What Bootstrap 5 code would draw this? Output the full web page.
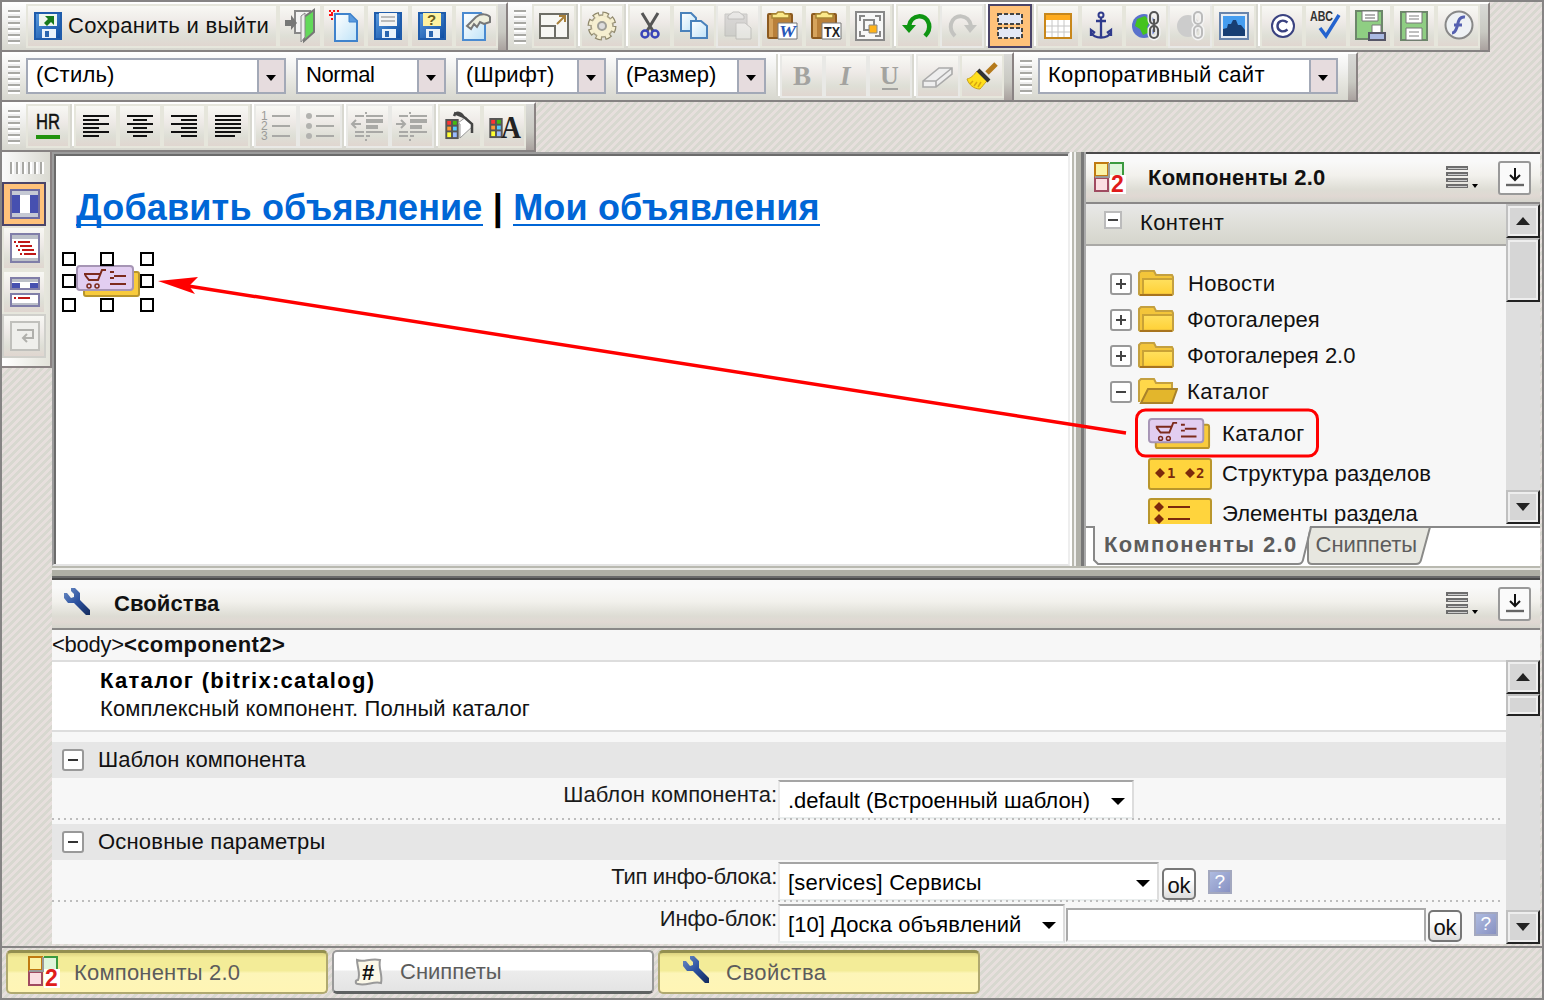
<!DOCTYPE html>
<html lang="ru">
<head>
<meta charset="utf-8">
<meta name="viewport" content="width=device-width, initial-scale=1">
<title>Визуальный редактор</title>
<link rel="stylesheet" href="https://cdn.jsdelivr.net/npm/bootstrap@5.3.0/dist/css/bootstrap.min.css">
<style>
body{font-family:"Liberation Sans",Arial,sans-serif;font-size:22px;line-height:26px;color:#111;margin:0;overflow:hidden;letter-spacing:.2px}
svg{display:block;flex:none;overflow:visible}
.app{width:1544px;height:1000px;border:2px solid #868484;background:linear-gradient(135deg,#e7dfdd 25%,#d8d8d0 25% 50%,#e7dfdd 50% 75%,#d8d8d0 75%) 0 0/8px 8px}
.tbrow{height:50px}
.tb{height:50px;border-right:2px solid #8a8383;border-bottom:2px solid #868282;border-top:2px solid #fff;background:linear-gradient(#fdfdfd,#f0f0ee 35%,#e6e6e0 60%,#d7d7cf);align-items:flex-start}
.grip{width:12px;height:34px;margin:6px 6px 0 6px;background:repeating-linear-gradient(#a8a8a4 0 2px,#fff 2px 4px,#eee 4px 6px)}
.ib{width:44px;height:44px;border:2px solid #e6e6dc;background:linear-gradient(#f8f8f4,#eeeae7 40%,#dedfd6 75%,#e0d6d0);padding:0;display:flex;align-items:center;justify-content:center;flex:none}
.ib.dim{border-color:#e9e9e6}
.ib.on{border:2px solid #4b4569;background:#ffc27a}
.ib.savebtn{width:252px;justify-content:flex-start;padding-left:6px;gap:6px;letter-spacing:.3px;color:#111}
.vsep{width:4px;height:42px;flex:none;background:linear-gradient(90deg,#d8d8d0 50%,#fff 50%)}
.cap{width:8px;height:46px;background:linear-gradient(#d9d9d7,#c9c9c2 60%,#aaa29f);flex:none;margin-left:auto}
.combo{height:36px;margin-top:4px;border:2px solid #a3a9b7;background:#fff;padding-left:8px;line-height:30px;display:flex;justify-content:space-between;margin-right:10px;flex:none;color:#000;white-space:nowrap}
.combo i{width:27px;height:32px;background:#e6dcde;border-left:2px solid #a3a9b7;display:flex;align-items:center;justify-content:center}
.combo i:after{content:"";border:5px solid transparent;border-top:6px solid #000;border-bottom:0;margin:4px 2px 0 0}
.side{width:50px}
.sidebox{height:216px;border-right:2px solid #8a8383;border-bottom:2px solid #8a8383;background:linear-gradient(90deg,#fff,#e3e3da)}
.sidebox .ib svg{margin-left:2px}
.sidegrip{height:30px;padding:10px 0 0 8px;background:linear-gradient(90deg,#fafafa,#d9d9d1)}
.sidegrip div{width:34px;height:12px;background:repeating-linear-gradient(90deg,#a8a8a4 0 2px,#fff 2px 4px,#eee 4px 6px)}
.editor{width:1018px;height:414px;border:2px solid #9c9c9c;border-right-color:#eee;border-bottom-color:#e4e4e4;background:#fff;box-shadow:inset 2px 2px #6b6b6b;position:relative;padding:32px 0 0 22px}
.editor h1{font-size:36px;font-weight:700;line-height:44px;margin:0;color:#000;white-space:nowrap;letter-spacing:.17px}
.editor h1 a{color:#0066d6;text-decoration:none;border-bottom:2px solid #0066d6;display:inline-block;line-height:36px;height:36px}
.frame8{position:absolute;left:6px;top:96px}
.vsplit{width:16px;height:414px;background:linear-gradient(90deg,#fff 0 2px,#b9b9b0 2px 4px,#f0f0ee 4px 6px,#b0b0a8 6px 11px,#777 11px 14px,#aaa 14px)}
.panel{width:454px;height:414px;background:#f7f7f7}
.phead{height:52px;border-top:2px solid #4a4a4a;border-bottom:2px solid #8a8888;background:linear-gradient(#f9f9f9 15%,#f2f1ec 45%,#dddcd4 75%,#e0d8d3 88%,#d4d4cc);font-weight:700;color:#111;flex:none}
.pin{width:33px;height:34px;border:2px solid #999;border-radius:3px;background:#fafafa;display:flex;align-items:center;justify-content:center;flex:none}
.grp{height:42px;background:linear-gradient(#e8e8e8,#e0e0da 45%,#d5d5cc);border-bottom:2px solid #aaa9a6;padding:0 0 3px 18px;gap:18px}
.sb{width:34px;background:#dedede;flex:none}
.sbb{height:34px;border:2px solid #c0c0c0;border-right:2px solid #222;border-bottom:2px solid #222;background:#d6d6d6;box-shadow:inset 2px 2px #eee,inset -2px -2px #eee;display:flex;align-items:center;justify-content:center;flex:none}
.pm{width:22px;height:22px;border:2px solid #999;border-radius:3px;background:#fff;display:flex;align-items:center;justify-content:center;flex:none}
.pm.s18{width:18px;height:18px;border-radius:0;border-color:#bbb}
.node{height:36px;padding-left:24px}
.node>svg{margin:0 12px 2px 6px}
.leaf{height:40px;padding-left:62px;gap:10px}
.tabsbar{height:40px;width:454px;color:#5c5c5c;position:relative;padding-bottom:2px}
.hsplit{height:12px;background:linear-gradient(#b9b9b0 0 2px,#ecece8 2px 4px,#b0b0a6 4px 10px,#6b6b6b 10px);margin-left:50px;width:1488px}
.props{margin-left:50px;width:1488px;height:366px;background:#f7f7f7}
.crumb{height:32px;border-bottom:2px solid #ddd;flex:none;white-space:nowrap;line-height:30px}
.about{height:70px;border-bottom:2px solid #ddd;background:#fff;padding:5px 0 0 48px;line-height:28px}
.sect{height:36px;background:#e6e6e6;padding-left:10px;gap:14px;letter-spacing:.1px}
.prow{height:46px;display:flex}
.plabel{width:725px;margin-right:1px;text-align:right;line-height:33px;flex:none;color:#1a1a1a;letter-spacing:0}
.psel{height:39px;border:2px solid #ddd;border-top-color:#a5a5a5;border-left-color:#e8e8e8;border-bottom-color:#eaeeee;background:#fff;display:flex;align-items:center;justify-content:space-between;padding:3px 7px 0 8px;color:#000;white-space:nowrap;flex:none}
.psel:after{content:"";border:7px solid transparent;border-top:7px solid #000;border-bottom:0}
.okb{width:34px;height:32px;border:2px solid #777;border-radius:5px;background:linear-gradient(#fff 35%,#ddd);display:flex;align-items:center;justify-content:center;padding-top:4px;flex:none;font-size:22px;line-height:20px;letter-spacing:-.2px}
.hlp{width:24px;height:24px;border:2px solid #a3a8bf;background:linear-gradient(135deg,#aebbe0,#8891c2);color:#fff;font-size:19px;font-weight:400;line-height:20px;text-align:center;flex:none}
.dots{height:2px;background:repeating-linear-gradient(90deg,#bdbdbd 0 2px,transparent 2px 6px);width:1452px}
.tasks{height:52px;border-top:2px solid #868484;padding:2px 0 0 4px;gap:4px}
.task{width:322px;height:44px;border:2px solid #b0a970;border-top:3px solid #938f50;border-radius:5px;background:linear-gradient(#ddd380 0,#f3ec98 12% 45%,#fdf5b8 52%,#fff5b5);color:#5c5c5c;padding-left:20px;gap:14px;letter-spacing:.2px}
.task.off{border:2px solid #999;border-bottom:3px solid #5f6262;background:linear-gradient(#fff 45%,#ececec 50%,#e4e4e4);letter-spacing:0}
.arrowlay{position:absolute;left:0;top:0;pointer-events:none}
</style>
</head>
<body>
<svg width="0" height="0" class="position-absolute">
<defs>
<linearGradient id="gb" x1="0" y1="0" x2="1" y2="1"><stop offset="0" stop-color="#5b9ce0"/><stop offset="1" stop-color="#0a4aa0"/></linearGradient>
<linearGradient id="gl" x1="0" y1="0" x2="1" y2="1"><stop offset="0" stop-color="#fff"/><stop offset="1" stop-color="#bfe3f8"/></linearGradient>
<linearGradient id="gf" x1="0" y1="0" x2="0" y2="1"><stop offset="0" stop-color="#ffdf5c"/><stop offset="1" stop-color="#ffd23a"/></linearGradient>
<linearGradient id="gw" x1="0" y1="0" x2="1" y2="1"><stop offset="0" stop-color="#6c8dc4"/><stop offset=".5" stop-color="#2c52a0"/><stop offset="1" stop-color="#132a5c"/></linearGradient>
<symbol id="floppy" viewBox="0 0 28 28"><path d="M1 1h26v26H1z" fill="url(#gb)" stroke="#1f5cab" stroke-width="2"/><path d="M8 17h14v9H8z" fill="#e8f2fb"/><path d="M11 19h4v6h-4z" fill="#2a66b0"/></symbol>
<symbol id="cart" viewBox="0 0 66 34"><rect x="8" y="7" width="55" height="24" rx="2" fill="#f8cb3c" stroke="#b9962c" stroke-width="2"/><rect x="1" y="1" width="56" height="24" rx="3" fill="#e2cef1" stroke="#a695b5" stroke-width="2"/><path d="M8 9h16M9 10l4 5h9l4-10h4M34 7h4M34 13h4M34 19h16M38 11h12" fill="none" stroke="#7c2a1c" stroke-width="2"/><circle cx="13" cy="21" r="2" fill="none" stroke="#7c2a1c" stroke-width="1.500"/><circle cx="21" cy="21" r="2" fill="none" stroke="#7c2a1c" stroke-width="1.500"/></symbol>
<symbol id="folder" viewBox="0 0 36 26"><path d="M1 24V3l2-2h13l2 4h16l1 2v17l-1 1H2z" fill="#f3c53a" stroke="#c4a040" stroke-width="2"/><path d="M5 24V9h29" fill="none" stroke="#c9a236" stroke-width="2"/><path d="M6 10h28v13H6z" fill="url(#gf)"/><path d="M2 25h32" stroke="#a8741e" stroke-width="2"/></symbol>
<symbol id="folderopen" viewBox="0 0 40 26"><path d="M1 24V3l2-2h13l2 4h16v5" fill="#ffd84a" stroke="#c4a040" stroke-width="2"/><path d="M3 25l7-14h29l-5 14z" fill="#e3b62c" stroke="#a9822a" stroke-width="2"/></symbol>
<symbol id="comp2" viewBox="0 0 32 32"><path d="M1 1h13v13H1z" fill="#fbf3a6" stroke="#c07a10" stroke-width="2"/><path d="M16 1h13v13H16z" fill="#dff5dc"/><path d="M16 1h13v12" fill="none" stroke="#3b9a3f" stroke-width="2"/><path d="M1 16h13v13H1z" fill="#fbdfe2" stroke="#a04a60" stroke-width="2"/><path d="M1 15h14V1" fill="none" stroke="#999" stroke-width="2"/><path d="M16 13h16v19H16z" fill="#fff"/><text x="17" y="30" font-family="Liberation Sans" font-weight="700" font-size="23" fill="#e01b1b" letter-spacing="0">2</text></symbol>
<symbol id="wrench" viewBox="0 0 26 28"><path d="M0 5v5l4 5h6l12 12h4v-5L16 12V5l-5-5H7v3l3 3v3L7 10 3 5z" fill="url(#gw)"/></symbol>
<symbol id="clip" viewBox="0 0 32 32"><rect x="2" y="4" width="24" height="24" rx="1" fill="#b9803a" stroke="#8c5a1f" stroke-width="2"/><path d="M3 5h4v22H3z" fill="#d6a35c"/><path d="M6 8V4h4l2-2h5l2 2h4v4z" fill="#fbe98a" stroke="#a88534" stroke-width="1.5"/></symbol>
<symbol id="pal" viewBox="0 0 14 22"><path d="M0 0h14v21H0z" fill="#555"/><path d="M2 2h4v4H2z" fill="#f33"/><path d="M8 2h4v4H8z" fill="#4b1"/><path d="M2 8h4v4H2z" fill="#f93"/><path d="M8 8h4v4H8z" fill="#5cf"/><path d="M2 14h4v5H2z" fill="#ff3"/><path d="M8 14h4v5H8z" fill="#9bf"/></symbol>
<symbol id="menu" viewBox="0 0 34 24"><path d="M0 0h22v4H0zM0 6h22v4H0zM0 12h22v4H0zM0 18h22v4H0z" fill="#6d6d6d"/><path d="M2 2h19v1H2zM2 8h19v1H2zM2 14h19v1H2zM2 20h19v1H2z" fill="#ccc"/><path d="M26 18h6l-3 4z" fill="#000"/></symbol>
<symbol id="dock" viewBox="0 0 20 22"><path d="M10 1v11M5 8l5 5 5-5" fill="none" stroke="#111" stroke-width="2"/><path d="M1 18h18" stroke="#666" stroke-width="2.4"/></symbol>
</defs>
</svg>

<div class="app d-flex flex-column position-relative">
  <!-- first toolbar row -->
  <div class="tbrow d-flex">
    <div class="tb d-flex" style="width:506px">
      <div class="grip"></div>
      <button class="ib savebtn" type="button"><svg width="28" height="28"><use href="#floppy"/><path d="M5 2h18v12H5z" fill="#eef6ee"/><path d="M11 4h9v9l-3-3-4 4-3-3 4-4z" fill="#187a1c"/></svg><span class="text-nowrap">Сохранить и выйти</span></button>
      <button class="ib" type="button"><svg width="32" height="34"><path d="M11 2h15v22H11z" fill="#f4f4f4" stroke="#888" stroke-width="2"/><path d="M20 8l10-7v22l-10 9z" fill="#63d95a" stroke="#777" stroke-width="2"/><path d="M17 7l4-3v24l-4 5z" fill="#eee" stroke="#888"/><path d="M1 11h6V6l6 8-6 7v-4H1z" fill="#777"/></svg></button>
      <button class="ib" type="button"><svg width="32" height="34"><path d="M7 5h15l7 7v20H7z" fill="url(#gl)" stroke="#3f82cc" stroke-width="2"/><path d="M21 5v8h8" fill="#5a9adf" stroke="#3f82cc"/><path d="M1 1h2v2H1zM3 3h2v2H3zM5 1h2v2H5zM1 5h4v2H1zM9 1h2v2H9zM3 9h2v2H3z" fill="#f11"/></svg></button>
      <button class="ib" type="button"><svg width="28" height="28"><use href="#floppy"/><path d="M5 1h18v13H5z" fill="#f4f4f4"/><path d="M7 5h14M7 9h14" stroke="#bbb" stroke-width="2"/></svg></button>
      <button class="ib" type="button"><svg width="28" height="28"><use href="#floppy"/><path d="M5 1h18v13H5z" fill="#fff2a0"/><text x="9" y="13" font-family="Liberation Sans" font-weight="700" font-size="15" fill="#665c20">?</text></svg></button>
      <button class="ib" type="button"><svg width="30" height="32"><path d="M2 3h18l4 5v22H2z" fill="url(#gl)" stroke="#4a8ad0" stroke-width="2"/><path d="M6 16l9-9c5-4 12-3 14 0v5l-6 2-4-2-3 5-3-3-3 5z" fill="#eeeedd" stroke="#777" stroke-width="2"/></svg></button>
      <div class="cap"></div>
    </div>
    <div class="tb d-flex" style="width:982px">
      <div class="grip"></div>
      <button class="ib" type="button"><svg width="30" height="28"><path d="M1 2h28v24H1zM1 14h15v12" fill="#f7f7f3" stroke="#6e6e66" stroke-width="2"/><path d="M18 12l8-8M20 4h6v6" stroke="#a8803a" stroke-width="2" fill="none"/></svg></button><div class="vsep"></div>
      <button class="ib" type="button"><svg width="30" height="30"><circle cx="15" cy="15" r="11.500" fill="none" stroke="#8f886c" stroke-width="6" stroke-dasharray="6 3.030"/><circle cx="15" cy="15" r="11" fill="#f6efd0" stroke="#a69f84" stroke-width="1.500"/><circle cx="15" cy="15" r="11.500" fill="none" stroke="#f6efd0" stroke-width="3.500" stroke-dasharray="4 5.030" stroke-dashoffset="-1"/><circle cx="15" cy="15" r="4" fill="#ddd" stroke="#9f9f98" stroke-width="2"/></svg></button><div class="vsep"></div>
      <button class="ib" type="button"><svg width="20" height="28"><path d="M2 1l11 18M18 1L7 19" stroke="#555" stroke-width="3"/><circle cx="5" cy="22" r="3.500" fill="none" stroke="#3a46b8" stroke-width="2.500"/><circle cx="15" cy="22" r="3.500" fill="none" stroke="#3a46b8" stroke-width="2.500"/></svg></button>
      <button class="ib" type="button"><svg width="28" height="28"><path d="M1 1h10l5 5v13H1z" fill="url(#gl)" stroke="#4a82bb" stroke-width="2"/><path d="M11 9h10l6 5v12H11z" fill="url(#gl)" stroke="#4a82bb" stroke-width="2"/></svg></button>
      <button class="ib dim" type="button"><svg width="32" height="32"><g opacity=".45"><path d="M3 4h22v22H3z" fill="#bbb" stroke="#999"/><path d="M6 6l5-4h6l5 4v3H6z" fill="#ddd" stroke="#888"/><path d="M14 13h9l6 5v11H14z" fill="#eee" stroke="#999"/></g></svg></button>
      <button class="ib" type="button"><svg width="32" height="32"><use href="#clip"/><path d="M12 13h19v16H12z" fill="#fff" stroke="#777"/><text x="13" y="27" font-family="Liberation Serif" font-style="italic" font-weight="700" font-size="17" textLength="17" lengthAdjust="spacingAndGlyphs" fill="#2756b8">W</text></svg></button>
      <button class="ib" type="button"><svg width="32" height="32"><use href="#clip"/><path d="M12 13h19v16H12z" fill="#fff" stroke="#777"/><text x="14" y="27" font-family="Liberation Sans" font-weight="700" font-size="15" textLength="16" lengthAdjust="spacingAndGlyphs" fill="#222">TX</text></svg></button>
      <button class="ib" type="button"><svg width="30" height="30"><path d="M1 1h28v28H1z" fill="#f7f7f7" stroke="#888" stroke-width="2"/><path d="M5 10V5h5M20 5h5v5M25 20v5h-5M10 25H5v-5M9 9h10v10H9z" fill="none" stroke="#888" stroke-width="2"/><path d="M14 14h8v8h-8z" fill="#ffb31a" stroke="#888"/></svg></button><div class="vsep"></div>
      <button class="ib" type="button"><svg width="32" height="26"><path d="M7 13C9 1 24 0 27 11c1 5-1 9-4 12" fill="none" stroke="#0f9512" stroke-width="4.500"/><path d="M0 12h14l-7 8z" fill="#0f9512"/></svg></button>
      <button class="ib dim" type="button"><svg width="32" height="26"><path d="M25 13C23 1 8 0 5 11c-1 5 1 9 4 12" fill="none" stroke="#c3c3c0" stroke-width="4"/><path d="M31 12H18l6 8z" fill="#c3c3c0"/></svg></button><div class="vsep"></div>
      <button class="ib on" type="button"><svg width="28" height="30"><path d="M2 3h24v10H2zM2 17h24v10H2z" fill="#e3e8f6" stroke="#444" stroke-width="2" stroke-dasharray="4 2"/></svg></button><div class="vsep"></div>
      <button class="ib" type="button"><svg width="28" height="28"><path d="M1 2h26v24H1z" fill="#fff" stroke="#c8871b" stroke-width="2"/><path d="M2 3h24v5H2z" fill="#ffab1f"/><path d="M8 8v17M14 8v17M20 8v17M2 14h24M2 20h24" stroke="#c6c6c6"/></svg></button>
      <button class="ib" type="button"><svg width="26" height="30"><circle cx="12" cy="4" r="2.500" fill="none" stroke="#2f3a8c" stroke-width="2"/><path d="M12 7v20M7 10h10M2 25v-6l4 3M22 25v-6l-4 3M3 22c2 6 16 6 18 0" fill="none" stroke="#2f3a8c" stroke-width="2.300"/></svg></button>
      <button class="ib" type="button"><svg width="30" height="32"><circle cx="13" cy="16" r="12" fill="#5a72cc"/><path d="M6 9l8-3 5 5-3 6 3 5-7 3-3-6-5-3z" fill="#45c31f"/><g fill="none" stroke="#f4f4f4" stroke-width="5"><rect x="19" y="2" width="8" height="12" rx="4"/><rect x="19" y="16" width="8" height="12" rx="4"/></g><g fill="none" stroke="#555" stroke-width="2.200"><rect x="19" y="2" width="8" height="12" rx="4"/><rect x="19" y="16" width="8" height="12" rx="4"/><path d="M23 9v13"/></g></svg></button>
      <button class="ib dim" type="button"><svg width="30" height="32"><circle cx="13" cy="16" r="11" fill="#ccc"/><g fill="none" stroke="#f4f4f4" stroke-width="5"><rect x="19" y="2" width="8" height="12" rx="4"/><rect x="19" y="16" width="8" height="12" rx="4"/></g><g fill="none" stroke="#bbb" stroke-width="2"><rect x="19" y="2" width="8" height="12" rx="4"/><rect x="19" y="16" width="8" height="12" rx="4"/></g></svg></button>
      <button class="ib" type="button"><svg width="30" height="28"><path d="M1 1h28v26H1z" fill="#e8edf4" stroke="#6884ac" stroke-width="2"/><path d="M4 4h22v20H4z" fill="#459df0"/><path d="M4 24v-7l4-1 1-4h3l2-4h3l2 5h3l4 5v6z" fill="#173e73"/></svg></button><div class="vsep"></div>
      <button class="ib" type="button"><svg width="24" height="28"><circle cx="13" cy="14" r="11" fill="#fff" stroke="#3a4280" stroke-width="2"/><path d="M17.500 10.500c-5-4-10-1-10 3.500s5 7.500 10 3.500" fill="none" stroke="#3a4280" stroke-width="2.400"/></svg></button>
      <button class="ib" type="button"><svg width="34" height="34"><text x="1" y="12" font-family="Liberation Sans" font-size="14" font-weight="700" fill="#333" textLength="23" lengthAdjust="spacingAndGlyphs">ABC</text><path d="M11 19l6 8L30 6" fill="none" stroke="#2463cf" stroke-width="3.500"/></svg></button>
      <button class="ib" type="button"><svg width="32" height="34"><path d="M2 2h26v28H2z" fill="#8fce83" stroke="#6d876b" stroke-width="2"/><path d="M8 2h16v10H8zM18 16h9v8h-9z" fill="#fff" stroke="#777"/><path d="M11 6h10M11 9h10" stroke="#999" stroke-width="1.500"/><path d="M15 24h16v7H15z" fill="#a9b9e2" stroke="#556" stroke-width="2"/></svg></button>
      <button class="ib" type="button"><svg width="30" height="32"><path d="M2 2h26v28H2z" fill="#8fce83" stroke="#6d876b" stroke-width="2"/><path d="M7 2h16v11H7zM7 18h16v12H7z" fill="#fff" stroke="#777"/><path d="M10 6h10M10 9h10M10 22h10M10 26h10" stroke="#aaa" stroke-width="1.500"/></svg></button>
      <button class="ib" type="button"><svg width="30" height="32"><circle cx="16" cy="15" r="13.500" fill="#eef1f4" stroke="#888" stroke-width="2"/><path d="M22 7c-7-1-7 7-8 10s-2 6-5 6M11 15h8" fill="none" stroke="#5560b0" stroke-width="3"/></svg></button>
      <div class="cap"></div>
    </div>
  </div>
  <!-- second toolbar row -->
  <div class="tbrow d-flex">
    <div class="tb d-flex" style="width:1012px">
      <div class="grip"></div>
      <div class="combo" style="width:260px">(Стиль)<i></i></div>
      <div class="combo" style="width:150px;letter-spacing:-.4px">Normal<i></i></div>
      <div class="combo" style="width:150px">(Шрифт)<i></i></div>
      <div class="combo" style="width:150px;letter-spacing:0">(Размер)<i></i></div>
      <div class="vsep"></div>
      <button class="ib dim" type="button"><svg width="26" height="34"><text x="4" y="26" font-family="Liberation Serif" font-size="27" font-weight="700" fill="#a3a3a0">B</text></svg></button>
      <button class="ib dim" type="button"><svg width="26" height="34"><text x="7" y="26" font-family="Liberation Serif" font-style="italic" font-size="27" font-weight="700" fill="#a3a3a0">I</text></svg></button>
      <button class="ib dim" type="button"><svg width="26" height="34"><text x="3" y="25" font-family="Liberation Serif" font-size="26" font-weight="700" fill="#a3a3a0">U</text><path d="M5 30h16" stroke="#a3a3a0" stroke-width="2"/></svg></button><div class="vsep"></div>
      <button class="ib dim" type="button"><svg width="34" height="22"><path d="M2 16L18 3h13v6L15 22H2zM2 16h13v6M15 16L31 3" fill="#eee" stroke="#aaa" stroke-width="1.600"/></svg></button>
      <button class="ib" type="button"><svg width="34" height="28"><path d="M22 11L31 2" stroke="#b57a1b" stroke-width="5"/><path d="M2 17c4-1 6-3 10-8l10 10c-3 3-5 6-7 8C9 27 4 23 2 17z" fill="#ffdf1c" stroke="#c9a21c"/><path d="M8 19l-3 3M12 20l-3 4M16 20l-3 5" stroke="#d9a512" stroke-width="1.500"/><path d="M13 8l11 11" stroke="#333" stroke-width="4"/></svg></button>
      <div class="cap"></div>
    </div>
    <div class="tb d-flex" style="width:344px">
      <div class="grip"></div>
      <div class="combo" style="width:300px;letter-spacing:.3px">Корпоративный сайт<i></i></div>
      <div class="cap"></div>
    </div>
  </div>
  <!-- third toolbar row -->
  <div class="tbrow d-flex">
    <div class="tb d-flex" style="width:534px">
      <div class="grip"></div>
      <button class="ib" type="button"><svg width="26" height="32"><text x="1" y="19" font-family="Liberation Sans" font-size="22" fill="#111" stroke="#111" stroke-width=".5" textLength="24" lengthAdjust="spacingAndGlyphs">HR</text><path d="M1 27h24" stroke="#22930e" stroke-width="4"/></svg></button><div class="vsep"></div>
      <button class="ib" type="button"><svg width="28" height="24"><path d="M1 2h26M1 6h16M1 10h26M1 14h16M1 18h26M1 22h16" stroke="#111" stroke-width="2"/></svg></button>
      <button class="ib" type="button"><svg width="28" height="24"><path d="M1 2h26M7 6h14M1 10h26M7 14h14M1 18h26M7 22h14" stroke="#111" stroke-width="2"/></svg></button>
      <button class="ib" type="button"><svg width="28" height="24"><path d="M1 2h26M11 6h16M1 10h26M11 14h16M1 18h26M11 22h16" stroke="#111" stroke-width="2"/></svg></button>
      <button class="ib" type="button"><svg width="28" height="24"><path d="M1 2h26M1 6h26M1 10h26M1 14h26M1 18h26M1 22h20" stroke="#111" stroke-width="2"/></svg></button><div class="vsep"></div>
      <button class="ib dim" type="button"><svg width="32" height="30"><path d="M12 5h18M12 15h18M12 25h18" fill="none" stroke="#a9a9a6" stroke-width="2"/><g font-family="Liberation Sans" font-size="12" fill="#9c9c99"><text x="1" y="9">1</text><text x="1" y="19">2</text><text x="1" y="29">3</text></g></svg></button>
      <button class="ib dim" type="button"><svg width="32" height="30"><path d="M12 5h18M12 15h18M12 25h18" stroke="#a9a9a6" stroke-width="2"/><circle cx="5" cy="5" r="3" fill="#b2b2af"/><circle cx="5" cy="15" r="3" fill="#b2b2af"/><circle cx="5" cy="25" r="3" fill="#b2b2af"/></svg></button><div class="vsep"></div>
      <button class="ib dim" type="button"><svg width="34" height="32"><path d="M4 6h9M15 6h17M16 16h11M4 22h9M15 22h17M4 26h9M15 26h4M1 14h9M5 10l-4 4 4 4M15 2v2M15 29v2" fill="none" stroke="#a9a9a6" stroke-width="2"/><path d="M15 9h17v4H15zM15 15h12v4H15z" fill="#a9a9a6"/></svg></button>
      <button class="ib dim" type="button"><svg width="34" height="32"><path d="M4 6h9M15 6h17M16 16h11M4 22h9M15 22h17M4 26h9M15 26h4M1 14h9M6 10l4 4-4 4M15 2v2M15 29v2" fill="none" stroke="#a9a9a6" stroke-width="2"/><path d="M15 9h17v4H15zM15 15h12v4H15z" fill="#a9a9a6"/></svg></button><div class="vsep"></div>
      <button class="ib" type="button"><svg width="32" height="30"><use href="#pal" x="1" y="8" width="14" height="21"/><path d="M14 12l8-6 7 9-13 12V13z" fill="#fff" stroke="#999"/><path d="M10 2l10 4 8 7v9M10 5c2-5 8-4 10 2" fill="none" stroke="#444" stroke-width="2.500"/></svg></button>
      <button class="ib" type="button"><svg width="34" height="34"><use href="#pal" x="2" y="9" width="14" height="21"/><text x="14" y="29" font-family="Liberation Serif" font-weight="700" font-size="32" textLength="20" lengthAdjust="spacingAndGlyphs" fill="#222">A</text></svg></button>
      <div class="cap"></div>
    </div>
  </div>
  <!-- work area -->
  <div class="d-flex">
    <div class="side">
      <div class="sidebox">
        <div class="sidegrip"><div></div></div>
        <button class="ib on" type="button"><svg width="30" height="30"><path d="M1 1h28v28H1z" fill="#c5c9d4" stroke="#6d6ba0" stroke-width="2"/><path d="M2 6h26v18H2z" fill="#4650b0"/><path d="M10 6h10v18H10z" fill="#fff"/></svg></button>
        <button class="ib" type="button"><svg width="30" height="30"><path d="M1 1h28v28H1z" fill="#fff" stroke="#807ea8" stroke-width="2"/><path d="M2 2h26v4H2zM2 25h26v3H2z" fill="#bcc0c8"/><path d="M4 9h2M8 9h12M6 13h2M10 13h12M8 17h2M12 17h12M10 21h2M14 21h12" stroke="#c01818" stroke-width="2"/></svg></button>
        <button class="ib" type="button"><svg width="30" height="32"><path d="M1 2h28v11H1zM1 18h28v12H1z" fill="#fff" stroke="#807ea8" stroke-width="2"/><path d="M2 3h26v3H2z" fill="#bcc0c8"/><path d="M2 7h8v5H2zM20 7h8v5h-8z" fill="#4650b0"/><path d="M4 22h2M8 22h12" stroke="#c01818" stroke-width="2"/><path d="M2 27h26v2H2z" fill="#bcc0c8"/></svg></button>
        <button class="ib" type="button" style="border-color:#d0d0cb"><svg width="30" height="30"><path d="M1 1h28v28H1z" fill="#efefec" stroke="#c0c0bc" stroke-width="2"/><path d="M7 9h16v8h-9M17 13l-4 4 4 4" fill="none" stroke="#b0b0ac" stroke-width="2"/></svg></button>
      </div>
    </div>
    <div class="editor">
      <h1><a href="#">Добавить объявление</a> | <a href="#">Мои объявления</a></h1>
      <svg class="frame8" width="96" height="64"><use href="#cart" x="16" y="15" width="66" height="34"/><g fill="#fff" stroke="#000" stroke-width="2"><path d="M3 3h12v12H3zM41 3h12v12H41zM81 3h12v12H81zM3 25h12v12H3zM81 25h12v12H81zM3 49h12v12H3zM41 49h12v12H41zM81 49h12v12H81z"/></g></svg>
    </div>
    <div class="vsplit"></div>
    <div class="panel">
      <div class="phead d-flex align-items-center">
        <svg width="32" height="32" class="ms-2"><use href="#comp2"/></svg><span style="margin-left:22px">Компоненты 2.0</span>
        <svg width="34" height="24" class="ms-auto"><use href="#menu"/></svg><span class="pin" style="margin:0 9px 0 18px"><svg width="20" height="22"><use href="#dock"/></svg></span>
      </div>
      <div class="d-flex" style="height:320px;margin-bottom:2px">
        <div class="flex-grow-1 overflow-hidden">
          <div class="grp d-flex align-items-center"><span class="pm s18" style="margin-bottom:6px"><svg width="10" height="2"><path d="M0 1h10" stroke="#444" stroke-width="2"/></svg></span><span style="letter-spacing:.4px">Контент</span></div>
          <div style="height:20px"></div>
          <div class="node d-flex align-items-center"><span class="pm"><svg width="10" height="10"><path d="M0 5h10M5 0v10" stroke="#444" stroke-width="2"/></svg></span><svg width="36" height="26"><use href="#folder"/></svg><span style="padding-left:2px;letter-spacing:.3px">Новости</span></div>
          <div class="node d-flex align-items-center"><span class="pm"><svg width="10" height="10"><path d="M0 5h10M5 0v10" stroke="#444" stroke-width="2"/></svg></span><svg width="36" height="26"><use href="#folder"/></svg><span style="padding-left:1px;letter-spacing:.1px">Фотогалерея</span></div>
          <div class="node d-flex align-items-center"><span class="pm"><svg width="10" height="10"><path d="M0 5h10M5 0v10" stroke="#444" stroke-width="2"/></svg></span><svg width="36" height="26"><use href="#folder"/></svg><span style="padding-left:1px;letter-spacing:0">Фотогалерея 2.0</span></div>
          <div class="node d-flex align-items-center"><span class="pm"><svg width="10" height="2"><path d="M0 1h10" stroke="#444" stroke-width="2"/></svg></span><svg width="40" height="26" style="margin-right:8px"><use href="#folderopen"/></svg><span style="padding-left:1px;letter-spacing:.4px">Каталог</span></div>
          <div style="height:4px"></div>
          <div class="leaf d-flex align-items-center"><svg width="64" height="33"><use href="#cart"/></svg><span style="letter-spacing:.4px">Каталог</span></div>
          <div class="leaf d-flex align-items-center"><svg width="64" height="32"><rect x="1" y="1" width="62" height="30" rx="2" fill="#ffd43d" stroke="#b9962c" stroke-width="2"/><path d="M7 15l5-5 5 5-5 5zM37 15l5-5 5 5-5 5z" fill="#7c2a0c"/><text x="19" y="20" font-family="DejaVu Sans Mono" font-weight="700" font-size="14" fill="#7c2a0c">1</text><text x="48" y="20" font-family="DejaVu Sans Mono" font-weight="700" font-size="14" fill="#7c2a0c">2</text></svg>Структура разделов</div>
          <div class="leaf d-flex align-items-center"><svg width="64" height="32"><rect x="1" y="1" width="62" height="30" rx="2" fill="#ffd43d" stroke="#b9962c" stroke-width="2"/><path d="M6 9l5-5 5 5-5 5zM6 21l5-5 5 5-5 5z" fill="#7c2a0c"/><path d="M20 9h22M20 21h22" stroke="#7c2a0c" stroke-width="2"/></svg><span style="letter-spacing:.05px">Элементы раздела</span></div>
        </div>
        <div class="sb d-flex flex-column"><div class="sbb"><svg width="14" height="8"><path d="M0 8l7-8 7 8z" fill="#222"/></svg></div><div class="sbb" style="height:64px"></div><div class="sbb mt-auto"><svg width="14" height="8"><path d="M0 0h14l-7 8z" fill="#222"/></svg></div></div>
      </div>
      <div class="tabsbar d-flex align-items-center">
        <svg class="position-absolute top-0 start-0" width="454" height="40"><path d="M0 0h454v40H0z" fill="#fff"/><path d="M222 1h122l-9 33q-1 4-5 4H226q-4 0-4-4l0-5z" fill="#e7e7e0" stroke="#8a8a88" stroke-width="2"/><path d="M8 0v34l4 4h200q4 0 5-4l7-34z" fill="#f7f7f7"/><path d="M0 1h8v33l4 4h200q4 0 5-4l8-33h229" fill="none" stroke="#888" stroke-width="2"/></svg>
        <b class="position-relative" style="margin-left:18px;letter-spacing:1.35px">Компоненты 2.0</b><span class="position-relative" style="margin-left:18px;letter-spacing:0">Сниппеты</span>
      </div>
    </div>
  </div>
  <div class="hsplit"></div>
  <!-- properties -->
  <div class="props">
    <div class="phead d-flex align-items-center"><svg width="26" height="28" style="margin:0 0 5px 12px"><use href="#wrench"/></svg><span style="margin-left:24px;letter-spacing:.1px">Свойства</span><svg width="34" height="24" class="ms-auto"><use href="#menu"/></svg><span class="pin" style="margin:0 9px 0 18px"><svg width="20" height="22"><use href="#dock"/></svg></span></div>
    <div class="crumb"><span style="letter-spacing:-.25px">&lt;body&gt;</span><b style="letter-spacing:.4px">&lt;component2&gt;</b></div>
    <div class="d-flex" style="height:282px">
      <div style="width:1454px">
        <div class="about"><div class="fw-bold text-black" style="letter-spacing:1.3px">Каталог (bitrix:catalog)</div><div style="letter-spacing:.1px">Комплексный компонент. Полный каталог</div></div>
        <div style="height:10px"></div>
        <div class="sect d-flex align-items-center"><span class="pm"><svg width="10" height="2"><path d="M0 1h10" stroke="#333" stroke-width="2"/></svg></span><span style="letter-spacing:0">Шаблон компонента</span></div>
        <div class="prow flex-column"><div class="d-flex" style="height:40px"><div class="plabel">Шаблон компонента:</div><div class="psel" style="width:356px;margin-top:2px;letter-spacing:-.03px">.default (Встроенный шаблон)</div></div><div class="dots"></div></div>
        <div class="sect d-flex align-items-center"><span class="pm"><svg width="10" height="2"><path d="M0 1h10" stroke="#333" stroke-width="2"/></svg></span><span style="letter-spacing:.2px">Основные параметры</span></div>
        <div class="prow flex-column" style="height:42px"><div class="d-flex" style="height:40px"><div class="plabel" style="letter-spacing:-.3px">Тип инфо-блока:</div><div class="psel" style="width:381px;margin-top:2px">[services] Сервисы</div><div class="okb" style="margin:8px 0 0 3px">ok</div><div class="hlp" style="margin:10px 0 0 12px">?</div></div><div class="dots"></div></div>
        <div class="d-flex" style="height:40px"><div class="plabel" style="letter-spacing:-.1px">Инфо-блок:</div><div class="psel" style="width:287px;margin-top:2px;letter-spacing:.05px">[10] Доска объявлений</div><div style="width:360px;height:34px;margin:6px 0 0 1px;border:2px solid #aaa;border-bottom-color:#eee;background:#fff"></div><div class="okb" style="margin:8px 0 0 2px">ok</div><div class="hlp" style="margin:10px 0 0 12px">?</div></div>
      </div>
      <div class="sb d-flex flex-column" style="height:284px;margin-top:-2px"><div class="sbb"><svg width="14" height="8"><path d="M0 8l7-8 7 8z" fill="#222"/></svg></div><div class="sbb" style="height:22px"></div><div class="sbb mt-auto"><svg width="14" height="8"><path d="M0 0h14l-7 8z" fill="#222"/></svg></div></div>
    </div>
  </div>
  <div class="tasks d-flex mt-auto">
    <div class="task d-flex align-items-center"><svg width="32" height="32" style="margin-bottom:2px"><use href="#comp2"/></svg>Компоненты 2.0</div>
    <div class="task off d-flex align-items-center"><svg width="32" height="28"><path d="M3 2c7 3 12-2 23 0-2 8 3 15 1 23-8-2-14 3-23 1-3 0-3-4 0-4 3-6-1-13-1-20z" fill="#fbf8e8" stroke="#999" stroke-width="2"/><text x="8" y="22" font-family="Liberation Sans" font-weight="700" font-size="22" fill="#111">#</text></svg>Сниппеты</div>
    <div class="task d-flex align-items-center"><svg width="30" height="28" viewBox="-3 0 30 28" style="margin:0 2px 5px 0"><use href="#wrench" width="26" height="28"/></svg><span style="letter-spacing:.5px">Свойства</span></div>
  </div>
  <svg class="arrowlay" width="1540" height="600"><path d="M1124 431L186 284" stroke="#f00" stroke-width="3.500"/><path d="M156 279l40-4-9 9 6 8z" fill="#f00"/><rect x="1134.500" y="408" width="181" height="46" rx="9" fill="none" stroke="#f00" stroke-width="3"/></svg>
</div>
<script src="https://cdn.jsdelivr.net/npm/bootstrap@5.3.0/dist/js/bootstrap.bundle.min.js"></script>
</body>
</html>
